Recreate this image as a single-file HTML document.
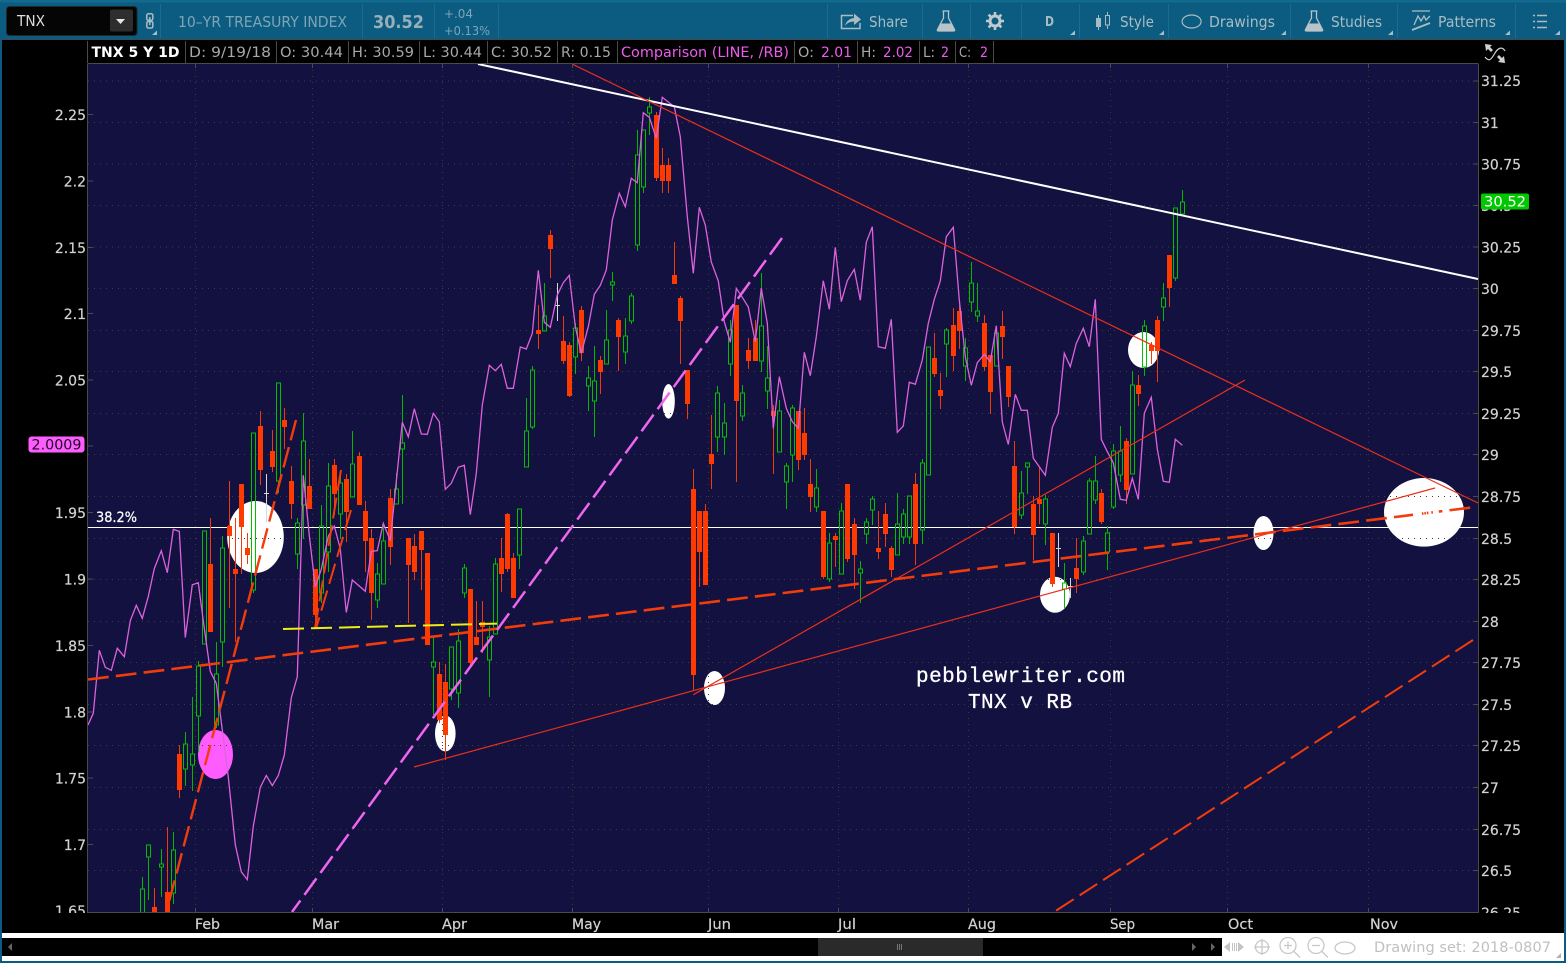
<!DOCTYPE html>
<html><head><meta charset="utf-8"><title>TNX</title>
<style>
html,body{margin:0;padding:0;background:#000;width:1566px;height:963px;overflow:hidden}
svg{display:block;font-family:"DejaVu Sans","Liberation Sans",sans-serif}
</style></head><body>
<svg xmlns="http://www.w3.org/2000/svg" width="1566" height="963" viewBox="0 0 1566 963">
<defs><clipPath id="c"><rect x="88" y="64" width="1390" height="848"/></clipPath></defs>
<rect width="1566" height="963" fill="#000"/>
<rect x="0" y="40" width="2" height="923" fill="#0b5c80"/>
<rect x="1564" y="40" width="2" height="923" fill="#0b5c80"/>
<rect x="88" y="64" width="1390" height="848" fill="#131140"/>
<g clip-path="url(#c)">
<g fill="#fff">
<ellipse cx="255.5" cy="537" rx="28.3" ry="36"/>
<ellipse cx="668.5" cy="401.3" rx="6.3" ry="17.3"/>
<ellipse cx="445.3" cy="733.5" rx="10.3" ry="18"/>
<ellipse cx="714.5" cy="688" rx="10.5" ry="17"/>
<ellipse cx="1055" cy="594.7" rx="15" ry="18"/>
<ellipse cx="1143.5" cy="350" rx="15.5" ry="18"/>
<ellipse cx="1263.5" cy="533" rx="10" ry="17"/>
<ellipse cx="1424" cy="512.3" rx="40" ry="34.3"/>
</g>
<ellipse cx="215.5" cy="754.5" rx="17.5" ry="24.5" fill="#ff5cff"/>
<path d="M88 81H1478M88 122.500H1478M88 164H1478M88 205.500H1478M88 247H1478M88 288.500H1478M88 330.500H1478M88 371.500H1478M88 413.500H1478M88 454.500H1478M88 496.500H1478M88 538.500H1478M88 579.500H1478M88 621.500H1478M88 662.500H1478M88 704.500H1478M88 745.500H1478M88 787.500H1478M88 829.500H1478M88 870.500H1478" stroke="#3e3e3e" stroke-width="1" stroke-dasharray="1 5" fill="none"/>
<path d="M195.500 64V912M312.500 64V912M442.500 64V912M572.500 64V912M708.500 64V912M838.500 64V912M968.500 64V912M1110.500 64V912M1227.500 64V912M1368.500 64V912" stroke="#3e3e2e" stroke-width="1" stroke-dasharray="1 5" fill="none"/>
<path d="M88 527.500H1478" stroke="#fff" stroke-width="1"/>
<!-- red wicks -->
<path fill="none" stroke="#ee3a0c" stroke-width="1" d="M154.500 888V912M167.500 827V912M179.500 745V798M210.500 518V632M229.500 481V608M235.500 518V642M241.500 484V574M247.500 533V564M260.500 411V485M272.500 430V472M284.500 408V449M291.500 466V519M309.500 459V509M315.500 569V627M334.500 459V515M346.500 474V542M359.500 452V505M365.500 501V572M371.500 529V620M390.500 489V565M408.500 538V623M414.500 534V580M421.500 531V590M427.500 553V645M439.500 662V723M445.500 664V760M470.500 589V665M476.500 601V645M482.500 601V653M501.500 538V592M507.500 513V572M513.500 553V598M538.500 305V349M550.500 230V278M563.500 316V364M569.500 342V397M581.500 306V361M600.500 356V394M618.500 318V371M656.500 112V181M662.500 148V193M668.500 158V193M674.500 242V284M680.500 296V364M687.500 370V419M693.500 469V690M699.500 511V587M705.500 504V585M711.500 415V489M736.500 305V482M748.500 338V369M755.500 320V361M773.500 405V474M798.500 411V470M804.500 408V460M810.500 459V512M823.500 511V579M835.500 533V567M847.500 484V562M854.500 518V589M878.500 511V559M885.500 503V547M891.500 546V577M915.500 473V565M934.500 333V377M940.500 373V409M953.500 308V371M959.500 305V349M984.500 315V371M990.500 355V414M1002.500 311V359M1008.500 366V407M1014.500 441V534M1033.500 496V560M1039.500 467V524M1052.500 533V587M1076.500 538V593M1101.500 489V524M1126.500 438V504M1138.500 375V406M1151.500 342V364M1157.500 316V382M1169.500 255V307"/>
<!-- red bodies -->
<path fill="none" stroke="#ff3a00" stroke-width="5" d="M154.500 907V912M167.500 892V912M179.500 754V790M210.500 564V632M229.500 526V536M235.500 569V574M241.500 484V527M247.500 548V555M260.500 426V470M272.500 451V467M284.500 420V427M291.500 481V504M309.500 486V509M315.500 569V615M334.500 465V494M346.500 479V512M359.500 456V505M365.500 511V541M371.500 538V593M390.500 498V547M408.500 538V565M414.500 546V572M421.500 531V550M427.500 553V645M439.500 674V720M445.500 682V735M470.500 589V663M476.500 637V645M482.500 622V627M501.500 558V574M507.500 514V569M513.500 558V598M538.500 330V334M550.500 235V249M563.500 341V361M569.500 345V396M581.500 310V353M600.500 360V372M618.500 320V337M656.500 115V178M662.500 165V181M668.500 165V181M674.500 275V284M680.500 298V321M687.500 370V404M693.500 489V675M699.500 511V552M705.500 511V585M711.500 454V464M736.500 305V401M748.500 350V361M755.500 338V361M773.500 411V416M798.500 411V460M804.500 433V455M810.500 484V497M823.500 511V577M835.500 536V540M847.500 484V559M854.500 524V555M878.500 548V552M885.500 514V534M891.500 548V570M915.500 484V544M934.500 358V374M940.500 390V396M953.500 325V356M959.500 311V331M984.500 323V367M990.500 355V392M1002.500 326V337M1008.500 366V397M1014.500 466V527M1033.500 504V535M1039.500 499V504M1052.500 533V584M1076.500 568V579M1101.500 493V522M1126.500 441V490M1138.500 385V394M1151.500 345V351M1157.500 320V351M1169.500 255V288"/>
<!-- green wicks -->
<path fill="none" stroke="#00b800" stroke-width="1" d="M142.500 877V889M148.500 857V900M161.500 849V864M161.500 867V897M173.500 832V850M173.500 893V904M185.500 732V744M185.500 769V786M192.500 697V754M192.500 765V791M198.500 661V666M198.500 716V752M216.500 642V674M216.500 725V728M222.500 536V548M222.500 642V667M253.500 590V593M278.500 481V493M297.500 518V523M297.500 554V569M303.500 413V441M303.500 505V539M321.500 505V526M321.500 593V603M328.500 463V486M328.500 552V572M340.500 470V483M340.500 514V539M352.500 431V464M377.500 563V574M377.500 600V608M383.500 524V541M396.500 473V489M402.500 395V443M402.500 449V504M433.500 637V662M433.500 667V715M451.500 689V700M458.500 629V641M458.500 693V708M464.500 564V568M464.500 593V598M489.500 626V637M489.500 660V697M495.500 558V564M519.500 555V569M526.500 398V431M532.500 366V370M532.500 427V429M544.500 283V316M575.500 323V328M575.500 357V374M588.500 366V378M588.500 386V411M594.500 346V381M594.500 401V437M606.500 310V340M612.500 272V282M612.500 285V301M625.500 318V336M625.500 352V364M631.500 293V296M631.500 321V324M637.500 130V155M637.500 245V251M643.500 187V193M649.500 97V107M649.500 113V135M717.500 386V393M717.500 437V452M724.500 403V423M724.500 437V455M730.500 320V330M730.500 364V376M742.500 385V393M742.500 416V421M761.500 273V326M761.500 361V372M767.500 346V378M767.500 391V409M779.500 400V411M786.500 463V466M786.500 482V509M792.500 405V408M792.500 455V482M816.500 469V488M816.500 507V512M829.500 533V543M829.500 579V582M841.500 503V511M860.500 561V569M860.500 573V603M866.500 518V522M866.500 534V544M872.500 496V499M872.500 510V525M897.500 493V524M903.500 509V514M903.500 537V544M909.500 537V544M922.500 459V463M922.500 530V544M946.500 328V330M946.500 344V377M965.500 338V348M965.500 366V381M971.500 262V283M971.500 302V312M977.500 283V311M977.500 316V322M1021.500 471V493M1021.500 515V519M1027.500 467V494M1045.500 495V499M1045.500 524V545M1064.500 563V583M1064.500 589V608M1083.500 536V541M1083.500 572V575M1089.500 478V481M1095.500 456V481M1095.500 500V504M1107.500 526V533M1107.500 552V570M1113.500 444V451M1113.500 507V509M1120.500 426V451M1120.500 475V482M1132.500 371V385M1144.500 320V326M1144.500 367V376M1163.500 283V298M1163.500 307V321M1175.500 278V281M1182.500 190V202"/>
<!-- green bodies -->
<path fill="none" stroke="#00c000" stroke-width="1" d="M140.500 889h4v24h-4zM146.500 845h4v12h-4zM159.500 864h4v3h-4zM171.500 850h4v43h-4zM183.500 744h4v25h-4zM190.500 754h4v11h-4zM196.500 666h4v50h-4zM202.500 531h4v113h-4zM214.500 674h4v51h-4zM220.500 548h4v94h-4zM251.500 433h4v157h-4zM276.500 383h4v98h-4zM295.500 523h4v31h-4zM301.500 441h4v64h-4zM319.500 526h4v67h-4zM326.500 486h4v66h-4zM338.500 483h4v31h-4zM350.500 464h4v33h-4zM375.500 574h4v26h-4zM381.500 541h4v43h-4zM394.500 489h4v15h-4zM400.500 443h4v6h-4zM431.500 662h4v5h-4zM449.500 647h4v42h-4zM456.500 641h4v52h-4zM462.500 568h4v25h-4zM487.500 637h4v23h-4zM493.500 564h4v70h-4zM517.500 509h4v46h-4zM524.500 431h4v36h-4zM530.500 370h4v57h-4zM542.500 316h4v15h-4zM573.500 328h4v29h-4zM586.500 378h4v8h-4zM592.500 381h4v20h-4zM604.500 340h4v24h-4zM610.500 282h4v3h-4zM623.500 336h4v16h-4zM629.500 296h4v25h-4zM635.500 155h4v90h-4zM641.500 130h4v57h-4zM647.500 107h4v6h-4zM715.500 393h4v44h-4zM722.500 423h4v14h-4zM728.500 330h4v34h-4zM740.500 393h4v23h-4zM759.500 326h4v35h-4zM765.500 378h4v13h-4zM777.500 411h4v41h-4zM784.500 466h4v16h-4zM790.500 408h4v47h-4zM814.500 488h4v19h-4zM827.500 543h4v36h-4zM839.500 511h4v63h-4zM858.500 569h4v4h-4zM864.500 522h4v12h-4zM870.500 499h4v11h-4zM895.500 524h4v31h-4zM901.500 514h4v23h-4zM907.500 496h4v41h-4zM920.500 463h4v67h-4zM926.500 347h4v128h-4zM944.500 330h4v14h-4zM963.500 348h4v18h-4zM969.500 283h4v19h-4zM975.500 311h4v5h-4zM994.500 333h4v33h-4zM1019.500 493h4v22h-4zM1025.500 463h4v4h-4zM1043.500 499h4v25h-4zM1062.500 583h4v6h-4zM1081.500 541h4v31h-4zM1087.500 481h4v53h-4zM1093.500 481h4v19h-4zM1105.500 533h4v19h-4zM1111.500 451h4v56h-4zM1118.500 451h4v24h-4zM1130.500 385h4v89h-4zM1142.500 326h4v41h-4zM1161.500 298h4v9h-4zM1173.500 208h4v70h-4zM1180.500 202h4v12h-4z"/>
<!-- white crosses -->
<path fill="none" stroke="#d8d8d8" stroke-width="1" d="M266.500 474V522M264 493.500h5M557.500 283V321M555 305.500h5M1058.500 533V567M1056 548.500h5M1070.500 578V598M1068 586.500h5"/>
<!-- comparison line -->
<polyline fill="none" stroke="#dc62dc" stroke-width="1.300" stroke-linejoin="miter" points="88,725 93.300,713.300 99.300,650.300 105.300,667.300 111.300,670.300 117.300,648.300 124.300,656.700 130.300,620.700 136.300,605.300 142.300,618.300 148.300,596.300 154.300,568.600 161.300,550.700 167.300,572.700 173.300,529.400 179.300,531.400 185.300,637.600 192.300,584.800 198.300,582.800 204.300,628.400 210.300,671.400 216.300,683.500 222.300,730 228.300,777 235.300,844.800 241.300,871.800 247.300,879.600 253.300,826 260.300,787.300 266.300,775.500 272.300,785.600 278.300,775.500 284.300,755.200 291.300,697.700 297.300,676.800 303.300,475.300 309.300,535.500 315.300,586.900 321.300,569.300 328.300,536.200 334.300,526 340.300,549 346.300,612.500 352.300,580 365.300,591.300 371.300,551.400 377.300,550.700 383.300,523.300 390.300,540.600 396.300,481.400 402.300,422.300 408.300,436.800 414.300,408.700 421.300,434 427.300,434.300 433.300,413.300 439.300,421.700 445.300,489.300 451.300,483.300 458.300,467.300 464.300,465.300 470.300,514.700 476.300,473.300 482.300,405 489.300,365.300 495.300,370.700 501.300,364.300 507.300,388.300 513.300,388.300 520.300,347 526.300,349 532.300,333.300 538.300,270.300 544.300,322.300 550.300,327.300 557.300,295 563.300,282.700 569.300,275.300 575.300,326.700 581.300,353.300 588.300,326.700 594.300,294.300 600.300,285.300 606.300,270 612.300,220 619.300,193.300 625.300,206.700 631.300,178.300 637.300,182.700 643.300,112.700 649.300,117.300 656.300,138.300 662.300,97.300 674.300,106.700 680.300,136.700 687.300,216.700 693.300,273.300 699.300,207.300 705.300,225 711.300,262 718.300,281 724.300,321.700 730.300,342.300 736.300,288.300 742.300,297.300 748.300,307 755.300,341.700 761.300,288.300 767.300,323.300 773.300,428.300 779.300,376.700 786.300,408.300 792.300,421.700 798.300,428.300 804.300,352.300 810.300,375.700 816.300,336.700 823.300,280.700 829.300,309.300 835.300,247.300 841.300,301.700 847.300,280.700 854.300,269.300 860.300,300.300 866.300,242.300 872.300,226.700 878.300,346.700 885.300,348.300 891.300,319.300 897.300,432.300 903.300,426 909.300,382.300 915.300,384.300 922.300,360 928.300,323.300 934.300,299.300 940.300,281 946.300,236.700 953.300,227.300 959.300,300 965.300,356.700 971.300,385.300 977.300,362.700 984.300,354.300 990.300,361.700 996.300,325.700 1002.300,422 1008.300,444.500 1015.300,394.300 1021.300,410.300 1027.300,410.300 1033.300,458.300 1039.300,466.700 1045.300,475.300 1052.300,427.300 1058.300,413.300 1064.300,353.300 1070.300,366.700 1076.300,343.300 1083.300,328.300 1089.300,346.700 1095.300,299.300 1101.300,439.300 1107.300,451.700 1113.300,462.700 1120.300,499.300 1126.300,500.300 1132.300,478.300 1138.300,499.300 1144.300,413.300 1151.300,397.300 1157.300,449 1163.300,481.300 1169.300,482.300 1175.300,439.300 1182.300,445.300"/>
<!-- trend lines -->
<line x1="478" y1="64" x2="1478" y2="279" stroke="#fff" stroke-width="2"/>
<g stroke="#e8301c" stroke-width="1.200" fill="none">
<line x1="572" y1="64" x2="1478" y2="503"/>
<line x1="693.300" y1="694.700" x2="1245" y2="380"/>
<line x1="414" y1="767" x2="1435" y2="488"/>
</g>
<g stroke="#f23c0c" fill="none">
<line x1="88" y1="679.500" x2="1470.700" y2="507.600" stroke-width="2.600" stroke-dasharray="20.800 7.200"/>
<line x1="296" y1="420" x2="160" y2="936" stroke-width="2.400" stroke-dasharray="21 7"/>
<line x1="341" y1="470" x2="315" y2="628.500" stroke-width="2" stroke-dasharray="21 7"/>
<line x1="351" y1="510" x2="316.500" y2="627" stroke-width="2" stroke-dasharray="21 7"/>
<line x1="1473" y1="640" x2="1054" y2="912" stroke-width="2" stroke-dasharray="21 7"/>
</g>
<line x1="1413" y1="514.800" x2="1443" y2="511.100" stroke="#fff" stroke-width="3" stroke-dasharray="9 1.500 1 1.500 1 1.500 3 1.500 6 4"/>
<line x1="283" y1="629" x2="497" y2="623.600" stroke="#eeee10" stroke-width="2" stroke-dasharray="21 7"/>
<line x1="782" y1="238" x2="292" y2="912" stroke="#ee66ee" stroke-width="2.500" stroke-dasharray="20.500 6.800"/>
</g>
<!-- axis frame -->
<path d="M87.500 64V912.500H1478.500V64M87.500 63.500H1478.500" stroke="#4a4a4a" stroke-width="1" fill="none"/>
<path d="M88 114.500h5M88 181h5M88 247.500h5M88 313.500h5M88 380h5M88 446h5M88 512.500h5M88 579h5M88 645.500h5M88 712h5M88 778h5M88 844.500h5M1473 81h5M1473 122.500h5M1473 164h5M1473 205.500h5M1473 247h5M1473 288.500h5M1473 330.500h5M1473 371.500h5M1473 413.500h5M1473 454.500h5M1473 496.500h5M1473 538.500h5M1473 579.500h5M1473 621.500h5M1473 662.500h5M1473 704.500h5M1473 745.500h5M1473 787.500h5M1473 829.500h5M1473 870.500h5M195.500 64v4M312.500 64v4M442.500 64v4M572.500 64v4M708.500 64v4M838.500 64v4M968.500 64v4M1110.500 64v4M1227.500 64v4M1368.500 64v4M195.500 908v4M312.500 908v4M442.500 908v4M572.500 908v4M708.500 908v4M838.500 908v4M968.500 908v4M1110.500 908v4M1227.500 908v4M1368.500 908v4" stroke="#4a4a4a" stroke-width="1" fill="none"/>
<!-- axis labels -->
<g font-size="14" fill="#d2d2d2" stroke="#d2d2d2" stroke-width=".2" text-anchor="end">
<text x="86" y="120">2.25</text><text x="86" y="186.500">2.2</text><text x="86" y="253">2.15</text><text x="86" y="319">2.1</text><text x="86" y="385.500">2.05</text><text x="86" y="518">1.95</text><text x="86" y="584.500">1.9</text><text x="86" y="651">1.85</text><text x="86" y="717.500">1.8</text><text x="86" y="783.500">1.75</text><text x="86" y="850">1.7</text><text x="86" y="916">1.65</text>
</g>
<g font-size="14" fill="#d2d2d2" stroke="#d2d2d2" stroke-width=".2">
<text x="1481" y="86">31.25</text><text x="1481" y="128">31</text><text x="1481" y="169.500">30.75</text><text x="1481" y="211">30.5</text><text x="1481" y="252.500">30.25</text><text x="1481" y="294">30</text><text x="1481" y="336">29.75</text><text x="1481" y="377">29.5</text><text x="1481" y="419">29.25</text><text x="1481" y="460">29</text><text x="1481" y="502">28.75</text><text x="1481" y="544">28.5</text><text x="1481" y="585">28.25</text><text x="1481" y="627">28</text><text x="1481" y="668">27.75</text><text x="1481" y="710">27.5</text><text x="1481" y="751">27.25</text><text x="1481" y="793">27</text><text x="1481" y="835">26.75</text><text x="1481" y="876">26.5</text><text x="1481" y="918">26.25</text>
</g>
<rect x="0" y="913" width="1566" height="20" fill="#000"/>
<rect x="0" y="913" width="2" height="20" fill="#0b5c80"/><rect x="1564" y="913" width="2" height="20" fill="#0b5c80"/>
<g font-size="14" fill="#d2d2d2" stroke="#d2d2d2" stroke-width=".2">
<text x="195" y="929" textLength="25" lengthAdjust="spacingAndGlyphs">Feb</text><text x="312" y="929" textLength="27" lengthAdjust="spacingAndGlyphs">Mar</text><text x="442" y="929" textLength="25" lengthAdjust="spacingAndGlyphs">Apr</text><text x="572" y="929" textLength="29" lengthAdjust="spacingAndGlyphs">May</text><text x="708" y="929" textLength="23" lengthAdjust="spacingAndGlyphs">Jun</text><text x="838" y="929" textLength="18" lengthAdjust="spacingAndGlyphs">Jul</text><text x="968" y="929" textLength="28" lengthAdjust="spacingAndGlyphs">Aug</text><text x="1110" y="929" textLength="25" lengthAdjust="spacingAndGlyphs">Sep</text><text x="1228" y="929" textLength="25" lengthAdjust="spacingAndGlyphs">Oct</text><text x="1370" y="929" textLength="28" lengthAdjust="spacingAndGlyphs">Nov</text>
</g>
<text x="96" y="522" font-size="14.500" fill="#fff" stroke="#fff" stroke-width=".25" textLength="41" lengthAdjust="spacingAndGlyphs">38.2%</text>
<g font-family="'Liberation Mono',monospace" font-size="21" fill="#fff" stroke="#fff" stroke-width=".3">
<text x="916" y="682" textLength="209">pebblewriter.com</text>
<text x="968" y="708" textLength="104">TNX v RB</text>
</g>
<!-- flags -->
<rect x="28.500" y="436.500" width="56" height="16" rx="3" fill="#ff5cff"/>
<text x="31.500" y="449.500" font-size="14" fill="#160a20" textLength="50" lengthAdjust="spacingAndGlyphs">2.0009</text>
<rect x="1481" y="193.500" width="48" height="16" rx="2" fill="#00c800"/>
<text x="1484" y="206.500" font-size="14" fill="#fff" textLength="42" lengthAdjust="spacingAndGlyphs">30.52</text>
<!-- status row -->
<path d="M185.500 41V63M276.500 41V63M348.500 41V63M419.500 41V63M487.500 41V63M557.500 41V63M617.500 41V63M794.500 41V63M857.500 41V63M919.500 41V63M955.500 41V63M993.500 41V63M87.500 41V63" stroke="#4a4a4a" stroke-width="1"/>
<g font-size="14" fill="#a8a8a8">
<text x="91.500" y="57" font-weight="bold" font-size="14.500" fill="#fff" textLength="88" lengthAdjust="spacingAndGlyphs">TNX 5 Y 1D</text>
<text x="189" y="57" textLength="82" lengthAdjust="spacingAndGlyphs">D: 9/19/18</text>
<text x="280" y="57" textLength="63" lengthAdjust="spacingAndGlyphs">O: 30.44</text>
<text x="352" y="57" textLength="62" lengthAdjust="spacingAndGlyphs">H: 30.59</text>
<text x="423" y="57" textLength="59" lengthAdjust="spacingAndGlyphs">L: 30.44</text>
<text x="491" y="57" textLength="61" lengthAdjust="spacingAndGlyphs">C: 30.52</text>
<text x="561" y="57" textLength="50" lengthAdjust="spacingAndGlyphs">R: 0.15</text>
<text x="798" y="57" textLength="16" lengthAdjust="spacingAndGlyphs">O:</text>
<text x="861" y="57" textLength="15" lengthAdjust="spacingAndGlyphs">H:</text>
<text x="923" y="57" textLength="12" lengthAdjust="spacingAndGlyphs">L:</text>
<text x="959" y="57" textLength="12" lengthAdjust="spacingAndGlyphs">C:</text>
</g>
<g font-size="14" fill="#ee5cee">
<text x="621" y="57" textLength="168" lengthAdjust="spacingAndGlyphs">Comparison (LINE, /RB)</text>
<text x="821" y="57" textLength="31" lengthAdjust="spacingAndGlyphs">2.01</text>
<text x="883" y="57" textLength="30" lengthAdjust="spacingAndGlyphs">2.02</text>
<text x="941" y="57" textLength="8" lengthAdjust="spacingAndGlyphs">2</text>
<text x="980" y="57" textLength="8" lengthAdjust="spacingAndGlyphs">2</text>
</g>
<!-- compare icon -->
<g fill="none" stroke="#d0d0d0" stroke-width="1.200">
<path d="M1485 57C1489 62 1491 60 1495 53C1498 48 1502 46 1505 51"/>
</g>
<path d="M1485 44l7 1-2 2 3 3-2 2-3-3-2 2zM1505 63l-7-1 2-2-3-3 2-2 3 3 2-2z" fill="#d0d0d0"/>
<!-- top toolbar -->
<rect x="0" y="0" width="1566" height="39.500" fill="#0b5c80"/>
<rect x="0" y="0" width="1566" height="2.500" fill="#136a8f"/>
<rect x="0" y="39" width="1566" height="1" fill="#3c4a52"/>
<path d="M160.500 4V38M362.500 4V38M434.500 4V38M498.500 4V38M827.500 4V38M922.500 4V38M970.500 4V38M1021.500 4V38M1079.500 4V38M1168.500 4V38M1290.500 4V38M1397.500 4V38M1515.500 4V38" stroke="#1a6d92" stroke-width="1"/>
<rect x="6.500" y="6.500" width="130.500" height="29" rx="3" fill="#050505" stroke="#1c2a30"/>
<rect x="110" y="9.500" width="23" height="22" rx="2" fill="#2e2e2e"/>
<path d="M116 19h9l-4.500 5z" fill="#e6e6e6"/>
<text x="17" y="26" font-size="15" fill="#dcdcdc" textLength="28" lengthAdjust="spacingAndGlyphs">TNX</text>
<g fill="none" stroke="#a9bcc4" stroke-width="1.500">
<rect x="146.800" y="13.800" width="6" height="6.500" rx="1.500"/><rect x="146.800" y="21.500" width="6" height="6.500" rx="1.500"/><path d="M149.800 17v8"/>
</g>
<g fill="#a9bcc4">
<path d="M157 30.500v4.500h-5zM1075 30.500v4.500h-5zM1164 30.500v4.500h-5zM1286 30.500v4.500h-5zM1393 30.500v4.500h-5zM1510 30.500v4.500h-5zM1560 30.500v4.500h-5z"/>
</g>
<g font-size="15" fill="#7ea4b5">
<text x="178" y="27" font-size="15" textLength="169" lengthAdjust="spacingAndGlyphs">10–YR TREASURY INDEX</text>
<text x="444" y="18" font-size="12.500" textLength="29" lengthAdjust="spacingAndGlyphs">+.04</text>
<text x="444" y="35" font-size="12.500" textLength="46" lengthAdjust="spacingAndGlyphs">+0.13%</text>
</g>
<text x="373" y="28" font-size="18" font-weight="bold" fill="#98aeb8" textLength="51" lengthAdjust="spacingAndGlyphs">30.52</text>
<g font-size="15" fill="#a9bcc4">
<text x="869" y="27" textLength="39" lengthAdjust="spacingAndGlyphs">Share</text>
<text x="1045" y="26" font-size="13" font-weight="bold" textLength="9" lengthAdjust="spacingAndGlyphs">D</text>
<text x="1120" y="27" textLength="34" lengthAdjust="spacingAndGlyphs">Style</text>
<text x="1209" y="27" textLength="66" lengthAdjust="spacingAndGlyphs">Drawings</text>
<text x="1331" y="27" textLength="51" lengthAdjust="spacingAndGlyphs">Studies</text>
<text x="1438" y="27" textLength="58" lengthAdjust="spacingAndGlyphs">Patterns</text>
</g>
<!-- share -->
<path d="M853 15.500H841.500V28.500H860V23" fill="none" stroke="#a9bcc4" stroke-width="1.500"/>
<path d="M845 26C846 21 850 18.500 854 18V13.500L861 19.500 854 25V21.500C850 21.500 847 23 845 26z" fill="#a9bcc4"/>
<!-- flask -->
<g fill="none" stroke="#b9c4c9" stroke-width="1.300"><path d="M942.500 11h7M943.500 11v7l-6 11.500c-.5 1 0 1.500 1 1.500h15c1 0 1.500-.5 1-1.500l-6-11.500v-7"/></g>
<path d="M941 23.500h10l4 7.500h-18z" fill="#b9c4c9"/>
<!-- gear -->
<g fill="none" stroke="#c0cace"><circle cx="995" cy="21" r="5" stroke-width="3"/><path d="M995 12v18M986 21h18M988.600 14.600l12.800 12.800M988.600 27.400l12.800-12.800" stroke-width="2.600" stroke-dasharray="2.800 12.400"/></g>
<!-- style -->
<path d="M1098.500 15v15" stroke="#a9bcc4"/><rect x="1096" y="18" width="5" height="9" fill="#a9bcc4"/>
<path d="M1107.500 12v3M1107.500 25v4" stroke="#a9bcc4"/><rect x="1105.500" y="15.500" width="4" height="9.500" fill="none" stroke="#a9bcc4"/>
<!-- drawings -->
<ellipse cx="1191.600" cy="21.500" rx="9.500" ry="6.500" fill="none" stroke="#a9bcc4" stroke-width="1.200"/>
<!-- studies flask -->
<g fill="none" stroke="#b9c4c9" stroke-width="1.300"><path d="M1310.500 11h7M1311.500 11v7l-6 11.500c-.5 1 0 1.500 1 1.500h15c1 0 1.500-.5 1-1.500l-6-11.500v-7"/></g>
<path d="M1309 23.500h10l4 7.500h-18z" fill="#b9c4c9"/>
<!-- patterns -->
<g fill="none" stroke="#a9bcc4" stroke-width="1.300"><path d="M1412 11h18"/><path d="M1414 25l4-9 3 5 3-5 2 4 4-4"/><path d="M1412 30l18-7" stroke-width="1.800"/></g>
<!-- list -->
<path d="M1537 15.500h10M1537 21.500h10M1537 27.500h10M1533 15.500h2M1533 21.500h2M1533 27.500h2" stroke="#a9bcc4" stroke-width="1.500"/>
<!-- bottom -->
<rect x="0" y="933" width="1566" height="28" fill="#fff"/>
<rect x="0" y="933" width="2" height="30" fill="#0b5c80"/><rect x="1564" y="933" width="2" height="30" fill="#0b5c80"/>
<rect x="0" y="961" width="1566" height="2" fill="#0b5c80"/>
<rect x="2" y="938" width="1220" height="18" fill="#000"/>
<rect x="818" y="938" width="165" height="18" fill="#2a2a2a"/>
<path d="M897.500 944v6M899.500 944v6M901.500 944v6" stroke="#777"/>
<path d="M8 947l4-4v8zM1196 947l-4-4v8zM1211 943l4 4-4 4z" fill="#666"/>
<path d="M1224 947l6-5v10zM1244 947l-6-5v10z" fill="#c4c4c4"/><path d="M1232.500 943v8M1234.500 943v8M1236.500 943v8" stroke="#c4c4c4"/>
<g fill="none" stroke="#c8c8c8" stroke-width="1.300">
<circle cx="1262" cy="947" r="6.500"/><path d="M1262 939v16M1254 947h16"/>
<circle cx="1288" cy="945.500" r="8"/><path d="M1294 951.500l6 6M1284 945.500h8M1288 941.500v8"/>
<circle cx="1316" cy="945.500" r="8"/><path d="M1322 951.500l6 6M1312 945.500h8"/>
<ellipse cx="1345" cy="948" rx="10" ry="6"/>
</g>
<text x="1374" y="952" font-size="14.500" fill="#c0c0c0" textLength="177" lengthAdjust="spacing">Drawing set: 2018-0807</text>
<path d="M1561 953v5h-5z" fill="#b0b0b0"/>
</svg>
</body></html>
